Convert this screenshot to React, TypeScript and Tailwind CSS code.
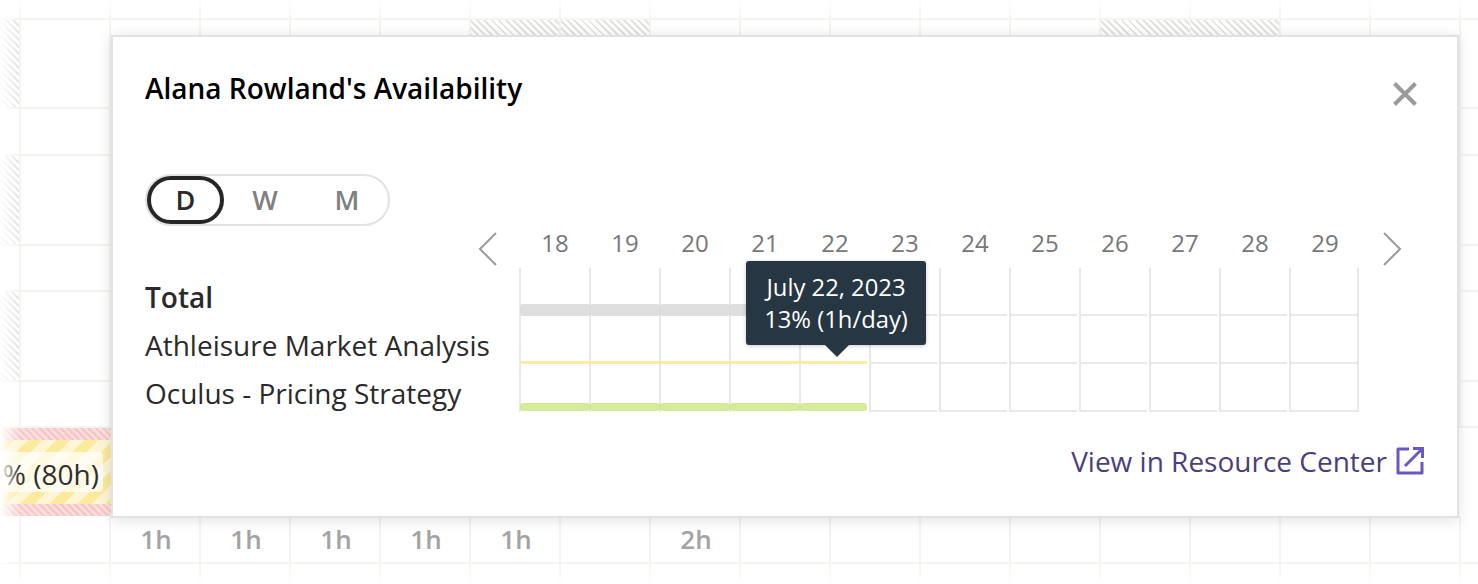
import React from 'react';

const DAYS = [18, 19, 20, 21, 22, 23, 24, 25, 26, 27, 28, 29];
const ROW_HEIGHTS = [20, 89, 47, 90, 46, 90, 46];
const HATCHED_LEFT = [1, 3, 5];
const HATCHED_TOP = [5, 6, 12, 13];
const HOURS: Record<number, string> = { 1: '1h', 2: '1h', 3: '1h', 4: '1h', 5: '1h', 7: '2h' };

const hatch =
  'bg-[repeating-linear-gradient(45deg,#e3e3e1_0,#e3e3e1_2px,#ffffff_2px,#ffffff_5px)]';
const redHatch =
  'bg-[repeating-linear-gradient(45deg,#f6c9c9_0,#f6c9c9_2.5px,#fbdfdf_2.5px,#fbdfdf_5px)]';

// one row of the schedule behind the popup
function BackRow({ row, height }: { row: number; height: number }) {
  return (
    <div className="flex" style={{ height }}>
      <div
        className={`w-[21px] shrink-0 border-r-2 border-b-2 border-[#f4f4f0] ${
          HATCHED_LEFT.includes(row) ? hatch : ''
        }`}
      />
      {Array.from({ length: 16 }).map((_, i) => (
        <div
          key={i}
          className={`w-[90px] shrink-0 border-r-2 border-b-2 border-[#f4f4f0] ${
            row === 1 && HATCHED_TOP.includes(i) ? hatch : ''
          }`}
        />
      ))}
      <div className="flex-1 border-b-2 border-[#f4f4f0]" />
    </div>
  );
}

function OverBar() {
  return (
    <div className="flex h-[88px] w-[300px] flex-col">
      <div className={`h-[12px] ${redHatch}`} />
      <div className="flex flex-1 items-center bg-[repeating-linear-gradient(135deg,#fbe99c_0,#fbe99c_10px,#fdf5d3_10px,#fdf5d3_20px)]">
        <div className="flex h-[40px] w-[103px] items-center justify-end rounded-[4px] bg-white/70 pr-[4px] pt-[4px] text-[28px] text-[#2e2e2e]">
          % (80h)
        </div>
      </div>
      <div className={`h-[12px] ${redHatch}`} />
    </div>
  );
}

function HoursRow() {
  return (
    <div className="flex h-[48px]">
      <div className="w-[21px] shrink-0 border-r-2 border-b-2 border-[#f4f4f0]" />
      {Array.from({ length: 16 }).map((_, i) => (
        <div
          key={i}
          className="flex w-[90px] shrink-0 items-center justify-center border-r-2 border-b-2 border-[#f4f4f0] pl-[2px] text-[26px] font-semibold text-[#a3a3a3]"
        >
          {HOURS[i] ?? ''}
        </div>
      ))}
      <div className="flex-1 border-b-2 border-[#f4f4f0]" />
    </div>
  );
}

type BarKind = 'total' | 'first' | 'second';

function Cell({ col, kind }: { col: number; kind: BarKind }) {
  const filled = col < 5;
  const last = col === 4;
  const end = col === 11;
  return (
    <div
      className={`flex h-[48px] w-[70px] flex-col justify-end border-l-2 border-[#e8e8e8] ${
        end ? 'border-r-2' : ''
      }`}
    >
      {filled && kind === 'total' && (
        <div className={`relative ml-[-1px] h-[12px] rounded-[3px] bg-[#d6d6d6]/80 ${last ? 'w-[67px]' : 'w-[70px]'}`} />
      )}
      {filled && kind === 'first' && (
        <div className={`relative ml-[-1px] h-[3px] bg-[#fbe9a0]/90 ${last ? 'w-[67px]' : 'w-[70px]'}`} />
      )}
      {filled && kind === 'second' && (
        <div className={`relative mb-[1px] ml-[-1px] h-[8px] rounded-[3px] bg-[#c9e77f]/80 ${last ? 'w-[67px]' : 'w-[70px]'}`} />
      )}
      {!filled && <div className={`h-[2px] bg-[#e8e8e8] ${end ? '' : 'mr-[2px]'}`} />}
    </div>
  );
}

function ChartRow({ label, kind, bold }: { label: string; kind: BarKind; bold?: boolean }) {
  return (
    <div className="flex">
      <div
        className={`flex w-[374px] items-end pb-[1px] text-[28px] leading-[36px] text-[#2a2a2a] ${
          bold ? 'font-semibold' : ''
        }`}
      >
        {label}
      </div>
      <div className="flex">
        {DAYS.map((d, i) => (
          <Cell key={d} col={i} kind={kind} />
        ))}
      </div>
    </div>
  );
}

export default function App() {
  return (
    <div className="relative h-[584px] w-[1478px] overflow-hidden bg-white font-['Open_Sans',sans-serif]">
      {/* schedule in the background */}
      {ROW_HEIGHTS.map((h, i) => (
        <BackRow key={i} row={i} height={h} />
      ))}
      <OverBar />
      <HoursRow />
      <BackRow row={9} height={20} />

      {/* fade at the edges of the schedule */}
      <div className="pointer-events-none absolute inset-y-0 left-0 w-[20px] bg-gradient-to-r from-white to-white/0" />
      <div className="pointer-events-none absolute inset-x-0 top-0 h-[18px] bg-gradient-to-b from-white to-white/0" />
      <div className="pointer-events-none absolute inset-x-0 bottom-0 h-[20px] bg-gradient-to-t from-white to-white/0" />

      {/* popup */}
      <div className="absolute left-[111px] top-[35px] h-[483px] w-[1348px] border-2 border-[#e2e2e2] bg-white pl-[32px] pr-[40px] shadow-[0_2px_14px_rgba(0,0,0,0.12)]">
        <div className="flex items-start justify-between pt-[33px]">
          <div className="text-[28px] font-semibold leading-[36px] text-black">
            Alana Rowland's Availability
          </div>
          <svg className="mt-[12px]" width="24" height="24" viewBox="0 0 24 24" fill="none">
            <path d="M1.5 1.5 L22.5 22.5 M22.5 1.5 L1.5 22.5" stroke="#9a9a9a" strokeWidth="4" />
          </svg>
        </div>

        <div className="mt-[68px] flex h-[52px] w-[245px] items-center rounded-full border-2 border-[#e2e2e2] text-[27px] font-semibold text-[#808080]">
          <div className="flex h-[48px] w-[77px] items-center justify-center rounded-full border-4 border-[#262626] text-[#2a2a2a]">
            D
          </div>
          <div className="flex w-[82px] justify-center">W</div>
          <div className="flex w-[82px] justify-center">M</div>
        </div>

        <div className="relative ml-[-32px] pl-[32px]">
          <div className="flex h-[42px] items-center">
            <div className="flex w-[375px] justify-end pr-[22px]">
              <svg className="mt-[4px]" width="20" height="34" viewBox="0 0 20 34" fill="none">
                <path d="M18 1 L2 17 L18 33" stroke="#9a9a9a" strokeWidth="2" />
              </svg>
            </div>
            <div className="mb-[8px] flex">
              {DAYS.map((d) => (
                <div key={d} className="w-[70px] text-center text-[24px] leading-[32px] text-[#777777]">
                  {d}
                </div>
              ))}
            </div>
            <svg className="ml-[22px] mt-[4px]" width="20" height="34" viewBox="0 0 20 34" fill="none">
              <path d="M2 1 L18 17 L2 33" stroke="#9a9a9a" strokeWidth="2" />
            </svg>
          </div>

          <ChartRow label="Total" kind="total" bold />
          <ChartRow label="Athleisure Market Analysis" kind="first" />
          <ChartRow label="Oculus - Pricing Strategy" kind="second" />

          {/* tooltip */}
          <div className="absolute left-[633px] top-[35px] flex h-[84px] w-[180px] flex-col items-center justify-center rounded-[3px] bg-[#263642] text-[23.8px] leading-[32px] text-white shadow-[0_1px_4px_rgba(0,0,0,0.2)]">
            <div>July 22, 2023</div>
            <div>13% (1h/day)</div>
            <div className="absolute left-[79px] top-[84px] h-0 w-0 border-x-[12px] border-t-[12px] border-x-transparent border-t-[#263642]" />
          </div>
        </div>

        <div className="mr-[-7px] mt-[31px] flex items-center justify-end gap-[9px] text-[28px] leading-[36px] text-[#4a3f7c]">
          <span>View in Resource Center</span>
          <svg width="28" height="28" viewBox="0 0 28 28" fill="none">
            <path d="M13 2 H2 V26 H26 V15" stroke="#6a58c0" strokeWidth="3" strokeLinejoin="round" />
            <path d="M17 1.5 H26.5 V11 M26 2 L9 19" stroke="#6a58c0" strokeWidth="3" />
          </svg>
        </div>
      </div>
    </div>
  );
}
